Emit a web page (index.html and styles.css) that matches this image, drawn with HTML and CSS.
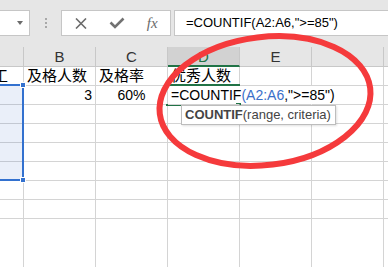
FILE: index.html
```html
<!DOCTYPE html>
<html lang="zh-CN">
<head>
    <meta charset="UTF-8">
    <title>COUNTIF</title>
    <link rel="stylesheet" href="styles.css">
</head>
<body>
    <div class="formula-bar">
        <div class="name-box"><span class="arrow"></span></div>
        <div class="grip"><i></i><i></i><i></i></div>
        <div class="fx-buttons">
            <span class="btn">
                <svg width="12" height="11" viewBox="0 0 12 11"><path d="M1 0.5L11 10.5M11 0.5L1 10.5" stroke="#6b6b6b" stroke-width="1.6" fill="none"/></svg>
            </span>
            <span class="btn">
                <svg width="16" height="12" viewBox="0 0 16 12"><path d="M1.5 5.5L6 10L14.5 1.5" stroke="#727272" stroke-width="2.6" fill="none"/></svg>
            </span>
            <span class="btn fx">fx</span>
        </div>
        <div class="formula-input">=COUNTIF(A2:A6,"&gt;=85")</div>
    </div>

    <div class="sheet">
        <!-- 列标题 -->
        <div class="hd"></div>
        <div class="hd">B</div>
        <div class="hd">C</div>
        <div class="hd current">D</div>
        <div class="hd">E</div>
        <div class="hd"></div>
        <div class="hd"></div>

        <!-- 第1行 -->
        <div class="c cut"><span>工</span></div>
        <div class="c">及格人数</div>
        <div class="c">及格率</div>
        <div class="c">优秀人数</div>
        <div class="c"></div>
        <div class="c"></div>
        <div class="c"></div>

        <!-- 第2行 -->
        <div class="c"></div>
        <div class="c num">3</div>
        <div class="c mid">60%</div>
        <div class="c edit">=COUNTIF<span class="ref">(A2:A6</span>,"&gt;=85")</div>
        <div class="c hide-line"></div>
        <div class="c"></div>
        <div class="c"></div>

        <div class="c"></div><div class="c"></div><div class="c"></div><div class="c"></div><div class="c"></div><div class="c"></div><div class="c"></div>
        <div class="c"></div><div class="c"></div><div class="c"></div><div class="c"></div><div class="c"></div><div class="c"></div><div class="c"></div>
        <div class="c"></div><div class="c"></div><div class="c"></div><div class="c"></div><div class="c"></div><div class="c"></div><div class="c"></div>
        <div class="c"></div><div class="c"></div><div class="c"></div><div class="c"></div><div class="c"></div><div class="c"></div><div class="c"></div>
        <div class="c"></div><div class="c"></div><div class="c"></div><div class="c"></div><div class="c"></div><div class="c"></div><div class="c"></div>
        <div class="c"></div><div class="c"></div><div class="c"></div><div class="c"></div><div class="c"></div><div class="c"></div><div class="c"></div>

        <!-- 底部空白 -->
        <div class="c tail"></div><div class="c tail"></div><div class="c tail"></div><div class="c tail"></div><div class="c tail"></div><div class="c tail"></div><div class="c tail"></div>

        <!-- 引用区域 A2:A6 -->
        <div class="range">
            <span class="knob top"></span>
            <span class="knob bottom"></span>
        </div>

        <!-- 正在编辑的 D2 -->
        <div class="active-cell"><span class="handle"></span></div>

        <div class="tip"><b>COUNTIF</b>(range, criteria)</div>
    </div>

    <svg class="mark" width="388" height="267" viewBox="0 0 388 267">
        <ellipse cx="265" cy="101" rx="106" ry="64" transform="rotate(-7 265 101)" fill="none" stroke="#f53a3c" stroke-width="6"/>
    </svg>
</body>
</html>
```

FILE: styles.css
```css
* {
    margin: 0;
    padding: 0;
    box-sizing: border-box;
}

body {
    width: 388px;
    height: 267px;
    overflow: hidden;
    position: relative;
    background: #fff;
    font-family: 'Liberation Sans', 'Noto Sans CJK SC', sans-serif;
    color: #000;
}

/* 编辑栏 */
.formula-bar {
    height: 47px;
    padding-top: 10px;
    display: flex;
    align-items: flex-start;
    background: #e6e6e6;
}

.name-box {
    width: 31px;
    height: 26px;
    margin-left: -1px;
    padding-right: 6px;
    display: flex;
    align-items: center;
    justify-content: flex-end;
    background: #fff;
    border: 1px solid #c6c6c6;
}

.arrow {
    width: 0;
    height: 0;
    border-left: 3.5px solid transparent;
    border-right: 3.5px solid transparent;
    border-top: 4px solid #6b6b6b;
}

.grip {
    width: 31px;
    height: 26px;
    display: flex;
    flex-direction: column;
    align-items: center;
    justify-content: center;
    gap: 2px;
}

.grip i {
    width: 2px;
    height: 2px;
    background: #a8a8a8;
}

.fx-buttons {
    width: 110px;
    height: 26px;
    padding-left: 1px;
    display: flex;
    align-items: center;
    background: #fff;
    border: 1px solid #c6c6c6;
}

.btn {
    width: 36px;
    display: flex;
    justify-content: center;
    align-items: center;
}

.fx {
    font-family: 'Liberation Serif', serif;
    font-style: italic;
    font-size: 15px;
    color: #6a6a6a;
}

.formula-input {
    flex: 1;
    height: 26px;
    margin-left: 3px;
    margin-right: -1px;
    padding-left: 11px;
    line-height: 24px;
    font-size: 13px;
    white-space: nowrap;
    background: #fff;
    border: 1px solid #c6c6c6;
}

/* 表格 */
.sheet {
    position: relative;
    display: grid;
    grid-template-columns: 24px repeat(6, 72px);
    grid-template-rows: 20px repeat(8, 19px) 49px;
}

.hd {
    text-align: center;
    font-size: 15px;
    line-height: 20px;
    color: #333;
    background: #e6e6e6;
    border-right: 1px solid #c8c8c8;
    border-bottom: 1px solid #c8c8c8;
}

.hd.current {
    background: #d2d2d2;
    color: #217346;
    border-bottom: 2px solid #217346;
}

.c {
    font-size: 15px;
    line-height: 18px;
    padding: 0 3px;
    white-space: nowrap;
    border-right: 1px solid #d4d4d4;
    border-bottom: 1px solid #d4d4d4;
}

.c.cut {
    display: flex;
    justify-content: flex-end;
    overflow: hidden;
    padding-right: 15px;
}

.c.cut span {
    flex-shrink: 0;
}

.c.num {
    text-align: right;
    font-size: 14px;
}

.c.mid {
    text-align: center;
    font-size: 14px;
}

.c.edit {
    font-size: 14px;
    position: relative;
    z-index: 1;
    border-right-color: transparent;
}

.c.hide-line {
    border-right-color: transparent;
}

.c.tail {
    border-bottom: none;
}

.ref {
    color: #3a6fc9;
}

.range {
    position: absolute;
    left: -2px;
    top: 37px;
    width: 26px;
    height: 97px;
    background: rgba(60, 110, 200, 0.11);
    border: 2px solid #3371cf;
}

.knob {
    position: absolute;
    right: -4px;
    width: 6px;
    height: 6px;
    background: #3371cf;
    border: 1px solid #fff;
}

.knob.top {
    top: -4px;
}

.knob.bottom {
    bottom: -4px;
}

.active-cell {
    position: absolute;
    left: 166px;
    top: 37px;
    width: 74px;
    height: 22px;
    border-top: 2px solid #217346;
    border-bottom: 2px solid #217346;
}

.handle {
    position: absolute;
    right: -1px;
    bottom: -4px;
    width: 5px;
    height: 5px;
    background: #217346;
}

.tip {
    position: absolute;
    left: 181px;
    top: 58px;
    height: 20px;
    padding: 0 4px 0 3px;
    z-index: 2;
    font-size: 13px;
    line-height: 18px;
    color: #444;
    white-space: nowrap;
    background: #fff;
    border: 1px solid #bdbdbd;
    box-shadow: 1px 1px 2px rgba(0, 0, 0, 0.12);
}

.mark {
    position: absolute;
    left: 0;
    top: 0;
    pointer-events: none;
    z-index: 5;
}
```
